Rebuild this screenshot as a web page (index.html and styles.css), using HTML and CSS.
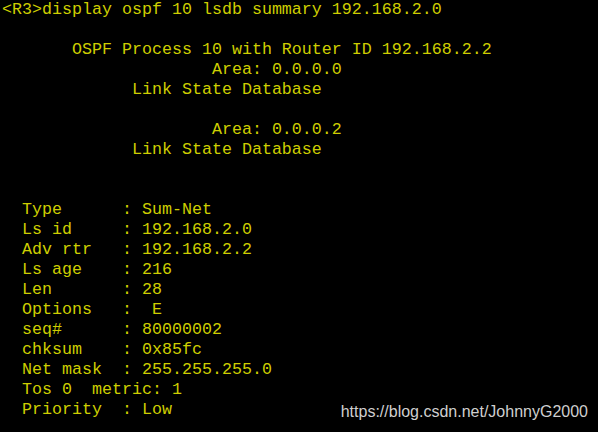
FILE: index.html
```html
<!DOCTYPE html>
<html>
<head>
<meta charset="utf-8">
<link rel="stylesheet" href="styles.css">
</head>
<body>
<div class="term">
<div class="out">
<div class="ln">&lt;R3&gt;display ospf 10 lsdb summary 192.168.2.0</div>
<div class="ln"> </div>
<div class="ln">       OSPF Process 10 with Router ID 192.168.2.2</div>
<div class="ln">                     Area: 0.0.0.0</div>
<div class="ln">             Link State Database</div>
<div class="ln"> </div>
<div class="ln">                     Area: 0.0.0.2</div>
<div class="ln">             Link State Database</div>
<div class="ln"> </div>
<div class="ln"> </div>
<div class="ln">  Type      : Sum-Net</div>
<div class="ln">  Ls id     : 192.168.2.0</div>
<div class="ln">  Adv rtr   : 192.168.2.2</div>
<div class="ln">  Ls age    : 216</div>
<div class="ln">  Len       : 28</div>
<div class="ln">  Options   :  E</div>
<div class="ln">  seq#      : 80000002</div>
<div class="ln">  chksum    : 0x85fc</div>
<div class="ln">  Net mask  : 255.255.255.0</div>
<div class="ln">  Tos 0  metric: 1</div>
<div class="ln">  Priority  : Low</div>
</div>
<div class="mark">https://blog.csdn.net/JohnnyG2000</div>
</div>
</body>
</html>
```
FILE: styles.css
```css
html, body {
  margin: 0;
  padding: 0;
  background: #000;
}
.term {
  position: relative;
  width: 598px;
  height: 432px;
  background: #000;
  overflow: hidden;
}
.out {
  display: flex;
  flex-direction: column;
  align-items: flex-start;
  padding-left: 2px;
  font-family: "Liberation Mono", "Courier New", monospace;
  font-size: 16.67px;
  line-height: 20px;
  color: #cece00;
}
.ln {
  white-space: pre;
  height: 20px;
}
.mark {
  position: absolute;
  right: 10px;
  bottom: 11px;
  font-family: "Liberation Sans", Arial, sans-serif;
  font-size: 16px;
  line-height: 18px;
  color: #cfcfcf;
}
```
